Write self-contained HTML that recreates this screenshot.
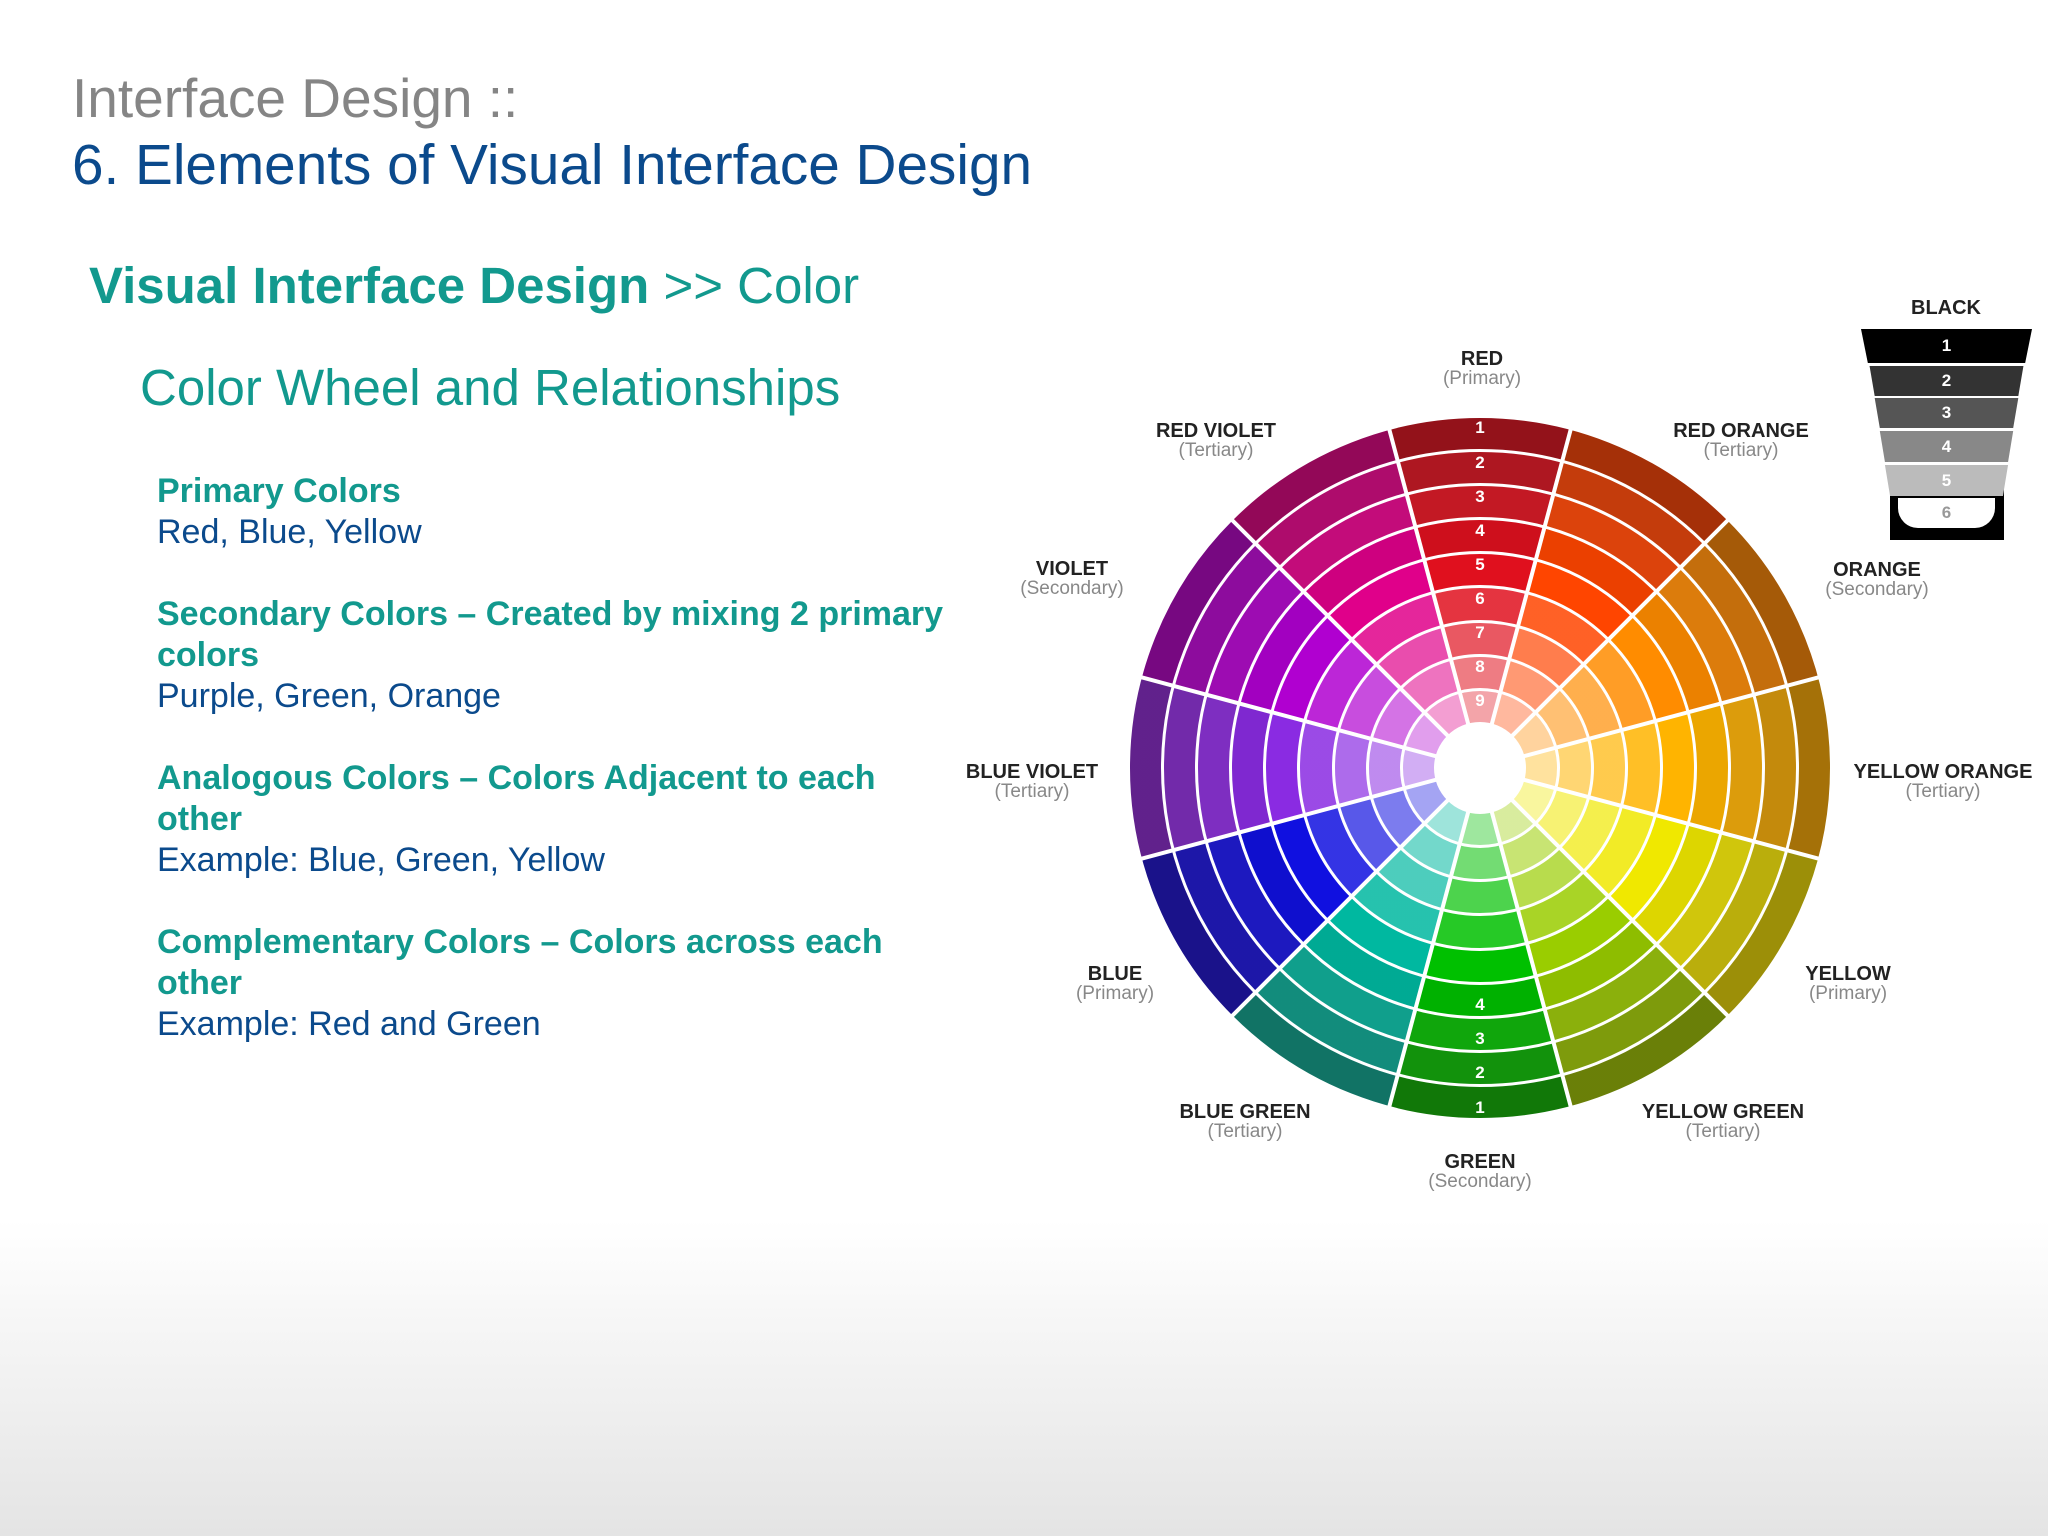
<!DOCTYPE html>
<html><head><meta charset="utf-8"><style>
html,body{margin:0;padding:0}
body{width:2048px;height:1536px;position:relative;overflow:hidden;font-family:"Liberation Sans",sans-serif;background:linear-gradient(#fff 0,#fff 1220px,#e4e4e4 1536px)}
.t{position:absolute;white-space:nowrap}
.h1{left:72px;top:66px;font-size:55px;color:#858585}
.h2{left:72px;top:133px;font-size:56.7px;color:#0b4a8c}
.h3{left:89px;top:256px;font-size:51px;color:#12998e}
.h4{left:140px;top:358px;font-size:51px;color:#12998e}
.list{position:absolute;left:157px;top:471px;font-size:34px;line-height:41px;color:#0b4a8c}
.list b{color:#12998e}
.list p{margin:0 0 41px 0}
.wheel{position:absolute;left:1127px;top:415px;width:706px;height:706px}
.ring{position:absolute;border-radius:50%;box-sizing:border-box;border:3px solid #fff;
--cg:conic-gradient(from -15deg,#e0101e 0 30deg,#ff4500 0 60deg,#ff8c00 0 90deg,#ffb400 0 120deg,#f0e800 0 150deg,#9acd00 0 180deg,#00c000 0 210deg,#00b8a0 0 240deg,#1010e0 0 270deg,#8a2be2 0 300deg,#b000d0 0 330deg,#e0008a 0 360deg)}
.sep{position:absolute;left:0;top:351px;width:706px;height:4px;background:#fff}
.lab{position:absolute;transform:translateX(-50%);text-align:center;font-weight:bold;font-size:20px;color:#222;line-height:20px;white-space:nowrap}
.lab span{display:block;font-weight:normal;color:#888;font-size:19px}
.n{position:absolute;transform:translate(-50%,-50%);color:#fff;font-size:17px;font-weight:bold}
.band{position:absolute;left:1861px;width:171px;color:#fff;font-size:17px;font-weight:bold;text-align:center}
</style></head><body>
<div class="t h1">Interface Design ::</div>
<div class="t h2">6. Elements of Visual Interface Design</div>
<div class="t h3"><b>Visual Interface Design</b> &gt;&gt; Color</div>
<div class="t h4">Color Wheel and Relationships</div>
<div class="list">
<p><b>Primary Colors</b><br>Red, Blue, Yellow</p>
<p><b>Secondary Colors – Created by mixing 2 primary<br>colors</b><br>Purple, Green, Orange</p>
<p><b>Analogous Colors – Colors Adjacent to each<br>other</b><br>Example: Blue, Green, Yellow</p>
<p><b>Complementary Colors – Colors across each<br>other</b><br>Example: Red and Green</p>
</div>

<div class="wheel">
<div class="ring" style="left:0;top:0;width:706px;height:706px;background:linear-gradient(rgba(40,20,20,.42),rgba(40,20,20,.42)),var(--cg)"></div>
<div class="ring" style="left:34px;top:34px;width:638px;height:638px;background:linear-gradient(rgba(60,40,40,.3),rgba(60,40,40,.3)),var(--cg)"></div>
<div class="ring" style="left:68px;top:68px;width:570px;height:570px;background:linear-gradient(rgba(80,60,60,.2),rgba(80,60,60,.2)),var(--cg)"></div>
<div class="ring" style="left:102px;top:102px;width:502px;height:502px;background:linear-gradient(rgba(0,0,0,.08),rgba(0,0,0,.08)),var(--cg)"></div>
<div class="ring" style="left:136px;top:136px;width:434px;height:434px;background:var(--cg)"></div>
<div class="ring" style="left:170px;top:170px;width:366px;height:366px;background:linear-gradient(rgba(255,255,255,.15),rgba(255,255,255,.15)),var(--cg)"></div>
<div class="ring" style="left:205px;top:205px;width:296px;height:296px;background:linear-gradient(rgba(255,255,255,.3),rgba(255,255,255,.3)),var(--cg)"></div>
<div class="ring" style="left:239px;top:239px;width:228px;height:228px;background:linear-gradient(rgba(255,255,255,.45),rgba(255,255,255,.45)),var(--cg)"></div>
<div class="ring" style="left:273px;top:273px;width:160px;height:160px;background:linear-gradient(rgba(255,255,255,.62),rgba(255,255,255,.62)),var(--cg)"></div>
<div class="sep" style="transform:rotate(15deg)"></div>
<div class="sep" style="transform:rotate(45deg)"></div>
<div class="sep" style="transform:rotate(75deg)"></div>
<div class="sep" style="transform:rotate(105deg)"></div>
<div class="sep" style="transform:rotate(135deg)"></div>
<div class="sep" style="transform:rotate(165deg)"></div>
<div style="position:absolute;left:307px;top:307px;width:92px;height:92px;border-radius:50%;background:#fff"></div>
<div class="n" style="left:353px;top:13px">1</div>
<div class="n" style="left:353px;top:48px">2</div>
<div class="n" style="left:353px;top:82px">3</div>
<div class="n" style="left:353px;top:116px">4</div>
<div class="n" style="left:353px;top:150px">5</div>
<div class="n" style="left:353px;top:184px">6</div>
<div class="n" style="left:353px;top:218px">7</div>
<div class="n" style="left:353px;top:252px">8</div>
<div class="n" style="left:353px;top:286px">9</div>
<div class="n" style="left:353px;top:693px">1</div>
<div class="n" style="left:353px;top:658px">2</div>
<div class="n" style="left:353px;top:624px">3</div>
<div class="n" style="left:353px;top:590px">4</div>
</div>

<div class="lab" style="left:1482px;top:349px">RED<span>(Primary)</span></div>
<div class="lab" style="left:1216px;top:421px">RED VIOLET<span>(Tertiary)</span></div>
<div class="lab" style="left:1741px;top:421px">RED ORANGE<span>(Tertiary)</span></div>
<div class="lab" style="left:1072px;top:559px">VIOLET<span>(Secondary)</span></div>
<div class="lab" style="left:1877px;top:560px">ORANGE<span>(Secondary)</span></div>
<div class="lab" style="left:1032px;top:762px">BLUE VIOLET<span>(Tertiary)</span></div>
<div class="lab" style="left:1943px;top:762px">YELLOW ORANGE<span>(Tertiary)</span></div>
<div class="lab" style="left:1115px;top:964px">BLUE<span>(Primary)</span></div>
<div class="lab" style="left:1848px;top:964px">YELLOW<span>(Primary)</span></div>
<div class="lab" style="left:1245px;top:1102px">BLUE GREEN<span>(Tertiary)</span></div>
<div class="lab" style="left:1723px;top:1102px">YELLOW GREEN<span>(Tertiary)</span></div>
<div class="lab" style="left:1480px;top:1152px">GREEN<span>(Secondary)</span></div>

<div class="lab" style="left:1946px;top:298px">BLACK</div>
<div style="position:absolute;left:1890px;top:480px;width:114px;height:60px;background:#000"></div>
<div class="band" style="top:329px;height:34px;line-height:34px;background:#000;clip-path:polygon(0 0,100% 0,96% 100%,4% 100%)">1</div>
<div class="band" style="top:366px;height:30px;line-height:30px;background:#333;clip-path:polygon(5% 0,95% 0,92% 100%,8% 100%)">2</div>
<div class="band" style="top:398px;height:30px;line-height:30px;background:#555;clip-path:polygon(8% 0,92% 0,89% 100%,11% 100%)">3</div>
<div class="band" style="top:431px;height:31px;line-height:31px;background:#888;clip-path:polygon(11% 0,89% 0,86% 100%,14% 100%)">4</div>
<div class="band" style="top:465px;height:31px;line-height:31px;background:#bbb;clip-path:polygon(14% 0,86% 0,83% 100%,17% 100%)">5</div>
<div class="band" style="top:498px;height:30px;line-height:30px;left:1898px;width:97px;background:#fff;color:#999;border-radius:0 0 20px 20px">6</div>
</body></html>
